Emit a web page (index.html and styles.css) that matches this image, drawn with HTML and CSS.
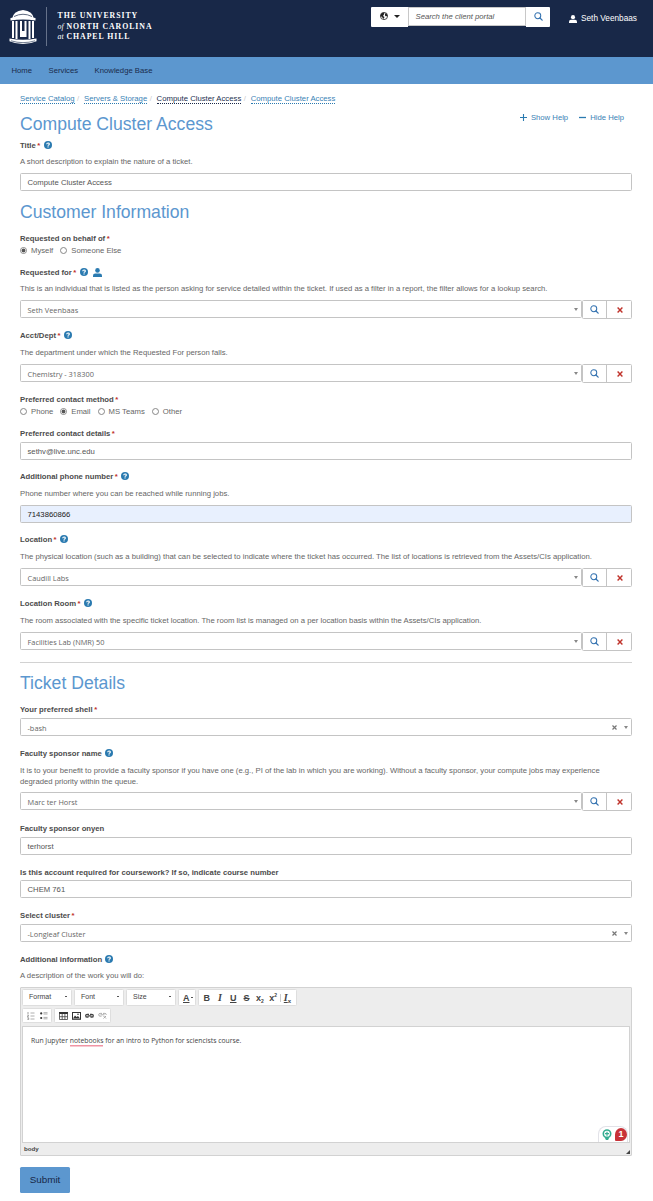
FILE: index.html
```
<!DOCTYPE html>
<html lang="en">
<head>
<meta charset="utf-8">
<title>Compute Cluster Access</title>
<link rel="stylesheet" href="styles.css">
</head>
<body>
<svg class="defs" width="0" height="0">
  <symbol id="help" viewBox="0 0 16 16"><circle cx="8" cy="8" r="8" fill="#2a7ab0"/><path d="M5.4 6.3C5.5 3.2 10.7 3.3 10.6 6.2C10.5 7.8 8.2 7.9 8.1 9.4" fill="none" stroke="#fff" stroke-width="2.2"/><circle cx="8.1" cy="11.9" r="1.3" fill="#fff"/></symbol>
  <symbol id="user" viewBox="0 0 16 16"><circle cx="8" cy="4.3" r="4.1"/><path d="M0 16V13.5Q0 10 4 9.7H12Q16 10 16 13.5V16Z"/></symbol>
  <symbol id="search" viewBox="0 0 16 16"><circle cx="6.7" cy="6.7" r="5.3" fill="none" stroke="currentColor" stroke-width="1.8"/><path d="M10.6 10.6L14.5 14.5" stroke="currentColor" stroke-width="2.2" stroke-linecap="round"/></symbol>
  <symbol id="cross" viewBox="0 0 10 10"><path d="M1 1L9 9M9 1L1 9" stroke="currentColor" stroke-width="2.4"/></symbol>
</svg>

<header class="top">
  <div class="brand">
    <svg class="well" viewBox="0 0 28 36" width="28" height="36">
      <path d="M3 10Q4 2 14 1Q24 2 25 10Z" fill="#fff"/>
      <path d="M5 7.5Q14 3 23 7.5" fill="none" stroke="#182848" stroke-width=".7"/>
      <path d="M1.5 9Q14 6.5 26.5 9V11.5Q14 9.5 1.5 11.5Z" fill="#fff"/>
      <path d="M4 12V29M7.5 12V30M12 12V28M16.5 12V28M20.5 12V30M24 12V29" stroke="#fff" stroke-width="2"/>
      <path d="M12.2 22H16.3V28H12.2Z" fill="#fff"/>
      <path d="M.5 29.5Q14 32 27.5 29.5V32.2Q14 38 .5 32.2Z" fill="#fff"/>
      <path d="M2 31.8Q14 35.5 26 31.8" fill="none" stroke="#182848" stroke-width=".6"/>
    </svg>
    <div class="wordmark">
      <div class="w1">THE UNIVERSITY</div>
      <div class="w2"><i>of</i> NORTH CAROLINA</div>
      <div class="w3"><i>at</i> CHAPEL HILL</div>
    </div>
  </div>
  <div class="search">
    <div class="scope">
      <svg width="8" height="8" viewBox="0 0 16 16"><circle cx="8" cy="8" r="7.2" fill="#fff" stroke="#222" stroke-width="1.6"/><path d="M2 4L6 1L9 3L6 8L9 10L7 14L4 10L1 8ZM10 3L13 3L15 7L12 9L10 7Z" fill="#222"/></svg>
      <span class="caret"></span>
    </div>
    <div class="query"><span>Search the client portal</span></div>
    <div class="go"><svg width="9" height="9"><use href="#search"/></svg></div>
  </div>
  <div class="account"><svg width="8" height="8" fill="#fff"><use href="#user"/></svg><span>Seth Veenbaas</span></div>
</header>
<nav class="nav"><span>Home</span><span>Services</span><span>Knowledge Base</span></nav>

<main>
  <div class="crumbs"><a>Service Catalog</a><b>/</b><a>Servers &amp; Storage</a><b>/</b><a class="current">Compute Cluster Access</a><b>/</b><a>Compute Cluster Access</a></div>
  <div class="head">
    <h1>Compute Cluster Access</h1>
    <div class="toggles"><svg width="7" height="7" viewBox="0 0 7 7"><path d="M3.5 0V7M0 3.5H7" stroke="#2a7ab0" stroke-width="1.1"/></svg><span>Show Help</span><svg class="minus" width="7" height="7" viewBox="0 0 7 7"><path d="M0 3.5H7" stroke="#2a7ab0" stroke-width="1.3"/></svg><span>Hide Help</span></div>
  </div>

  <div class="field title">
    <label><span>Title</span><em>*</em><svg class="q"><use href="#help"/></svg></label>
    <p class="near">A short description to explain the nature of a ticket.</p>
    <div class="box">Compute Cluster Access</div>
  </div>

  <h2>Customer Information</h2>

  <div class="field g10">
    <label><span>Requested on behalf of</span><em>*</em></label>
    <div class="radios"><i class="on"></i><span>Myself</span><i></i><span>Someone Else</span></div>
  </div>

  <div class="field g10">
    <label><span>Requested for</span><em>*</em><svg class="q"><use href="#help"/></svg><svg class="person" fill="#2a7ab0"><use href="#user"/></svg></label>
    <p class="near">This is an individual that is listed as the person asking for service detailed within the ticket. If used as a filter in a report, the filter allows for a lookup search.</p>
    <div class="lookup"><div class="box pick">Seth Veenbaas<s></s></div><div class="btns"><div><svg width="9" height="9"><use href="#search"/></svg></div><div class="red"><svg width="6" height="6"><use href="#cross"/></svg></div></div></div>
  </div>

  <div class="field g11">
    <label><span>Acct/Dept</span><em>*</em><svg class="q"><use href="#help"/></svg></label>
    <p>The department under which the Requested For person falls.</p>
    <div class="lookup"><div class="box pick">Chemistry - 318300<s></s></div><div class="btns"><div><svg width="9" height="9"><use href="#search"/></svg></div><div class="red"><svg width="6" height="6"><use href="#cross"/></svg></div></div></div>
  </div>

  <div class="field g11">
    <label><span>Preferred contact method</span><em>*</em></label>
    <div class="radios"><i></i><span>Phone</span><i class="on"></i><span>Email</span><i></i><span>MS Teams</span><i></i><span>Other</span></div>
  </div>

  <div class="field g10">
    <label><span>Preferred contact details</span><em>*</em></label>
    <div class="box tight">sethv@live.unc.edu</div>
  </div>

  <div class="field g10">
    <label><span>Additional phone number</span><em>*</em><svg class="q"><use href="#help"/></svg></label>
    <p>Phone number where you can be reached while running jobs.</p>
    <div class="box filled">7143860866</div>
  </div>

  <div class="field g10">
    <label><span>Location</span><em>*</em><svg class="q"><use href="#help"/></svg></label>
    <p>The physical location (such as a building) that can be selected to indicate where the ticket has occurred. The list of locations is retrieved from the Assets/CIs application.</p>
    <div class="lookup"><div class="box pick">Caudill Labs<s></s></div><div class="btns"><div><svg width="9" height="9"><use href="#search"/></svg></div><div class="red"><svg width="6" height="6"><use href="#cross"/></svg></div></div></div>
  </div>

  <div class="field g11">
    <label><span>Location Room</span><em>*</em><svg class="q"><use href="#help"/></svg></label>
    <p>The room associated with the specific ticket location. The room list is managed on a per location basis within the Assets/CIs application.</p>
    <div class="lookup"><div class="box pick">Facilities Lab (NMR) 50<s></s></div><div class="btns"><div><svg width="9" height="9"><use href="#search"/></svg></div><div class="red"><svg width="6" height="6"><use href="#cross"/></svg></div></div></div>
  </div>

  <hr>
  <h2 class="details">Ticket Details</h2>

  <div class="field g10">
    <label><span>Your preferred shell</span><em>*</em></label>
    <div class="box pick tight">-bash<svg class="clear"><use href="#cross"/></svg><s></s></div>
  </div>

  <div class="field g11">
    <label><span>Faculty sponsor name</span><svg class="q"><use href="#help"/></svg></label>
    <p class="two">It is to your benefit to provide a faculty sponsor if you have one (e.g., PI of the lab in which you are working). Without a faculty sponsor, your compute jobs may experience<br>degraded priority within the queue.</p>
    <div class="lookup"><div class="box pick">Marc ter Horst<s></s></div><div class="btns"><div><svg width="9" height="9"><use href="#search"/></svg></div><div class="red"><svg width="6" height="6"><use href="#cross"/></svg></div></div></div>
  </div>

  <div class="field g12">
    <label><span>Faculty sponsor onyen</span></label>
    <div class="box tight">terhorst</div>
  </div>

  <div class="field g11">
    <label><span>Is this account required for coursework? If so, indicate course number</span></label>
    <div class="box closer">CHEM 761</div>
  </div>

  <div class="field g11">
    <label><span>Select cluster</span><em>*</em></label>
    <div class="box pick tight">-Longleaf Cluster<svg class="clear"><use href="#cross"/></svg><s></s></div>
  </div>

  <div class="field g11">
    <label><span>Additional information</span><svg class="q"><use href="#help"/></svg></label>
    <p class="near">A description of the work you will do:</p>
  </div>

  <div class="editor">
    <div class="bar">
      <div class="combo">Format<i></i></div>
      <div class="combo">Font<i></i></div>
      <div class="combo">Size<i></i></div>
      <div class="set color"><u>A</u><i></i></div>
      <div class="set styles"><span>B</span><span class="it">I</span><span class="un">U</span><span class="st">S</span><span>x<small>2</small></span><span>x<small class="up">2</small></span><b></b><span class="it"><u>I</u><small class="x">x</small></span></div>
    </div>
    <div class="bar second">
      <div class="set lists">
        <svg width="8" height="8" viewBox="0 0 8 8"><path d="M3.5 1H7.5M3.5 4H7.5M3.5 7H7.5" stroke="#999" stroke-width=".8"/><path d="M1 0V2.2M.3 3.2H1.6L.4 5H1.8M.3 6H1.7V7.7H.3" fill="none" stroke="#777" stroke-width=".7"/></svg>
        <svg width="8" height="8" viewBox="0 0 8 8"><path d="M3.5 .7H7.5M3.5 2H7.5M3.5 5.4H7.5M3.5 6.8H7.5" stroke="#999" stroke-width=".8"/><circle cx="1.2" cy="1.4" r="1.1"/><circle cx="1.2" cy="6" r="1.1"/></svg>
      </div>
      <div class="set media">
        <svg width="9" height="8" viewBox="0 0 9 8"><path d="M0 0H9V2H0Z"/><path d="M.5 1V7.5H8.5V1M.5 4.7H8.5M3.2 2V7.5M5.9 2V7.5" fill="none" stroke="#444" stroke-width=".8"/></svg>
        <svg width="9" height="8" viewBox="0 0 9 8"><rect x=".5" y=".5" width="8" height="6.8" fill="#fff" stroke="#333"/><path d="M1 6.5L3 3.5L4.5 5L6 4L8 6.5Z"/><circle cx="6" cy="2.3" r=".8"/></svg>
        <svg width="9" height="6" viewBox="0 0 9 6"><path d="M4 1.4H2.2Q.7 1.4 .7 2.8T2.2 4.2H3.5M5 1.4H6.8Q8.3 1.4 8.3 2.8T6.8 4.2H5.5M2.5 2.8H6.5" fill="none" stroke="#444" stroke-width="1.3"/></svg>
        <svg width="9" height="7" viewBox="0 0 9 7"><path d="M4 1.4H2.2Q.7 1.4 .7 2.8T2.2 4.2H3.5M5 1.4H6.8Q8.3 1.4 8.3 2.8M2.5 2.8H6.5M5.5 4L8 6.5M8 4L5.5 6.5" fill="none" stroke="#aaa" stroke-width="1"/></svg>
      </div>
    </div>
    <div class="page"><span>Run Jupyter <u>notebooks</u> for an intro to Python for sciencists course.</span>
      <div class="checker">
        <svg width="10" height="12" viewBox="0 0 10 12"><circle cx="5" cy="4.7" r="3.7" fill="#fff" stroke="#35ad91" stroke-width="1.6"/><path d="M5 2.7V6.7M3 4.7H7" stroke="#35ad91" stroke-width="1.2"/><path d="M3.2 8.5H6.8V10L5.8 11H4.2L3.2 10Z" fill="#35ad91"/></svg>
        <span>1</span>
      </div>
    </div>
    <div class="path"><span>body</span><i></i></div>
  </div>

  <div class="submit">Submit</div>
</main>
</body>
</html>
```

FILE: styles.css
```
* { box-sizing: border-box; }
body { margin: 0; background: #fff; color: #666; font: 7.71px/12px "Liberation Sans", Arial, sans-serif; width: 653px; height: 1201px; overflow: hidden; }
svg { display: block; flex: none; }
.defs { position: absolute; }
label, p, .crumbs, .radios, .box, .nav, .combo { white-space: nowrap; }

.top { display: flex; align-items: flex-start; height: 57px; background: #182848; color: #fff; }
.brand { display: flex; width: 371px; padding: 7px 0 0 9px; }
.well { margin: 2px 8.5px 0 0; }
.wordmark { height: 39px; padding: 4px 0 0 11px; border-left: 1px solid #66728a; font: bold 7.8px/10.5px "Liberation Serif", serif; letter-spacing: .95px; white-space: nowrap; }
.wordmark i { letter-spacing: 0; font-weight: normal; }
.search { display: flex; align-items: flex-start; width: 179px; height: 20px; margin-top: 7px; }
.scope { display: flex; align-items: center; justify-content: center; gap: 6px; width: 37px; height: 20px; background: #fff; border-radius: 1px 0 0 1px; padding-bottom: 2px; }
.caret { border: 3px solid transparent; border-top-color: #222; border-bottom: 0; }
.query { width: 118px; height: 19px; padding-left: 6.5px; background: #fff; border: 1px solid #c8c8c8; color: #555; font-style: italic; line-height: 17px; }
.go { display: flex; align-items: center; justify-content: center; width: 24px; height: 20px; padding-bottom: 2px; background: #fff; color: #3472b0; border-radius: 0 1px 1px 0; }
.account { display: flex; align-items: center; gap: 4px; margin: 12px 0 0 19px; font-size: 8.25px; line-height: 13px; }
.nav { display: flex; height: 27px; padding-left: 11.5px; background: #5c97cf; color: #1a2b4c; line-height: 27px; gap: 16.5px; }

main { padding: 0 21px 0 20px; }
.crumbs { display: flex; height: 12px; margin-top: 8px; color: #3a82b5; font-size: 7.74px; line-height: 13px; }
.crumbs a { border-bottom: 1px dotted #2a7ab0; height: 12px; }
.crumbs b { width: 9.4px; padding-left: 2.5px; color: #ccc; font-weight: normal; }
.crumbs .current { color: #23304f; border-color: #182848; }
.head { display: flex; justify-content: space-between; height: 35px; }
h1, h2 { margin: 0; color: #5c97cf; font-size: 17.63px; font-weight: normal; line-height: 20px; white-space: nowrap; }
h1 { margin-top: 10px; }
.toggles { display: flex; align-items: center; height: 12px; margin: 7px 8px 0 0; color: #3a82b5; gap: 4px; line-height: 13px; }
.toggles .minus { margin-left: 7px; }

h2 { margin-top: 11px; }
h2.details { margin-top: 10px; }
.g10 { margin-top: 10px; }
.g11 { margin-top: 11px; }
.g12 { margin-top: 12px; }
label { display: flex; align-items: center; height: 12px; color: #4c4c4c; font-weight: bold; line-height: 12px; }
label span, label em { padding-top: 1px; }
label em { margin-left: 1.5px; color: #c0332b; font-style: normal; }
.q { width: 8px; height: 8px; margin-left: 3.3px; }
.person { width: 9px; height: 9px; margin-left: 5px; }
p { height: 12px; margin: 5px 0 0; line-height: 13px; }
p.near { margin-top: 4px; }
p.two { height: 22px; padding-top: 1px; line-height: 11px; }
.box { display: flex; align-items: center; flex: 1; height: 18px; margin-top: 6px; padding: 1px 0 0 6.5px; border: 1px solid #c4c4c4; border-radius: 1.5px; color: #555; }
.box.tight { margin-top: 3px; }
.box.closer { margin-top: 2px; }
.box.filled { background: #e8f0fe; color: #222; }
.box.pick { padding-right: 3.5px; color: #666; font-family: "Open Sans", "Noto Sans", sans-serif; font-size: 7.38px; }
.pick s { margin-left: auto; border: 2px solid transparent; border-top: 3px solid #888; border-bottom: 0; }
.clear { width: 5px; height: 5px; margin-left: auto; color: #777; }
.pick .clear + s { margin-left: 7px; }
.lookup { display: flex; height: 18px; margin-top: 6px; }
.lookup .box { margin: 0; }
.btns { display: flex; width: 50px; height: 19px; border: 1px solid #c4c4c4; border-radius: 1.5px; color: #3472b0; }
.btns div { display: flex; flex: 1; align-items: center; justify-content: center; }
.btns .red { border-left: 1px solid #c4c4c4; color: #c0332b; padding-left: 1px; }
.radios { display: flex; align-items: center; height: 12px; padding-top: 1px; }
.radios i { width: 7px; height: 7px; margin-right: 4px; border: 1px solid #888; border-radius: 50%; }
.radios i.on { background: radial-gradient(circle, #555 0 1.7px, #fff 2.2px); }
.radios span { margin-right: 7px; padding-top: 1px; }
hr { height: 1px; margin: 12px 0 0; border: 0; background: #d2d2d2; }

.editor { height: 169px; margin-top: 6px; padding: 1px; border: 1px solid #d2d2d2; background: #ededed; border-radius: 1px; color: #444; }
.bar { display: flex; gap: 2px; height: 17px; font-size: 7px; }
.combo, .set { display: flex; align-items: center; background: #fff; border: 1px solid #dedede; border-radius: 1.5px; }
.combo { width: 50px; padding: 0 4px 2px 6px; justify-content: space-between; }
.combo i, .color i { width: 2px; height: 1px; background: #555; }
.color { width: 18px; padding: 0 2px 0 4px; justify-content: space-between; font-size: 9px; font-weight: bold; }
.styles { width: 99px; padding-left: 1px; font-size: 9px; font-weight: bold; }
.styles span { display: flex; flex: none; width: 13.3px; height: 14px; align-items: center; justify-content: center; }
.styles b { width: 1px; height: 8px; background: #ccc; }
.styles small { align-self: flex-end; font-size: 5px; line-height: 8px; }
.styles small.up { align-self: flex-start; }
.styles small.x { font-family: "Liberation Sans", sans-serif; font-style: normal; font-size: 6px; }
.styles .it { font-family: "Liberation Serif", serif; font-style: italic; font-size: 10px; }
.styles .un { text-decoration: underline; }
.styles .st { text-decoration: line-through; }
.second { height: 15px; margin-top: 2px; fill: #333; }
.lists { width: 30px; gap: 5px; padding-left: 4px; }
.media { width: 57px; gap: 4px; padding-left: 4px; }
.page { position: relative; height: 117px; margin-top: 3px; padding: 8px; background: #fff; border: 1px solid #d2d2d2; font: 6.82px/12px "Open Sans", "Noto Sans", sans-serif; white-space: nowrap; }
.page u { text-decoration: none; box-shadow: 0 1.5px #f094a4; display: inline-block; height: 9px; line-height: 9px; }
.checker { position: absolute; right: 1px; bottom: 0; display: flex; align-items: center; gap: 3px; width: 30px; height: 16px; padding-left: 3px; border: 1px solid #e2e2e8; border-bottom: 0; border-radius: 8px 8px 0 0; background: #fff; }
.checker span { width: 13px; height: 13px; border-radius: 50% 50% 50% 1px; background: #c83238; color: #fff; font: bold 9px/12px "Liberation Sans", sans-serif; text-align: center; }
.path { display: flex; align-items: center; justify-content: space-between; height: 12px; padding-left: 2px; font-size: 6.2px; font-weight: bold; }
.path i { align-self: flex-end; border: 2px solid transparent; border-right-color: #444; border-bottom-color: #444; margin-bottom: 1px; }
.submit { width: 50px; height: 26px; margin-top: 11px; background: #5c97cf; border-radius: 1.5px; color: #182848; font-size: 9.9px; line-height: 26px; text-align: center; }
```
